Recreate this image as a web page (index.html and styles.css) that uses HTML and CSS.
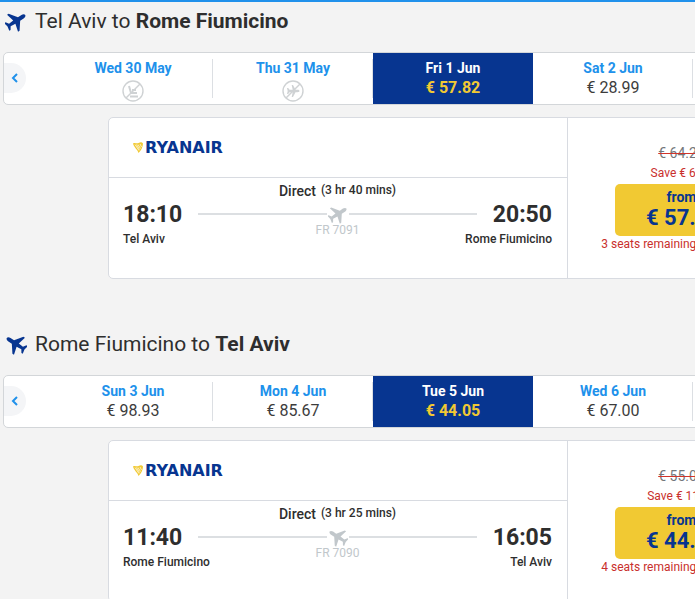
FILE: index.html
```html
<!DOCTYPE html>
<html lang="en">
<head>
    <meta charset="UTF-8">
    <meta name="viewport" content="width=device-width, initial-scale=1.0">
    <title>Select flights</title>
    <link rel="stylesheet" href="styles.css">
</head>
<body>
    <svg class="sprite" aria-hidden="true">
        <symbol id="plane" viewBox="0 0 24 24">
            <path transform="rotate(57 12 12)" d="M23 16.500v-2l-8.800-6.500V3.500C14.200 1.500 13 0 12 0S9.800 1.500 9.800 3.500V8L1 14.500v2l8.800-2.300.6 5.800L7 22.300V24l5-1 5 1v-1.700L13.600 20l.6-5.800z"/>
        </symbol>
        <symbol id="harp" viewBox="0 0 10 11">
            <path fill="#f1c933" d="M0 1.500C2 0 3.500 2 5.500 1 7.500 0 9 0 10 1.500 10 5 8 8.500 5.500 11 5 8 1 5.500 0 1.500z"/>
            <path fill="none" stroke="#fff" stroke-width=".7" d="M2 2.500l4 6M3.500 2.500l3 5M5 2.500l2.500 4M7 2l1.500 3"/>
        </symbol>
    </svg>

    <main class="flights">
        <section class="flight-list">
            <h2 class="route">
                <svg class="route-icon"><use href="#plane"/></svg>
                <span>Tel Aviv to <strong>Rome Fiumicino</strong></span>
            </h2>

            <div class="carousel">
                <button class="carousel-prev" aria-label="Previous dates">
                    <svg viewBox="0 0 8 10"><path d="M6 1L2 5l4 4"/></svg>
                </button>
                <button class="date">
                    <span class="day">Wed 30 May</span>
                    <svg class="no-flight" viewBox="0 0 22 22">
                        <circle cx="11" cy="11" r="10"/>
                        <path d="M4 18L18 4"/>
                        <path class="thick" d="M7 6l2 7h6M8 16.500h8M10 10h4"/>
                    </svg>
                </button>
                <button class="date">
                    <span class="day">Thu 31 May</span>
                    <svg class="no-flight" viewBox="0 0 22 22">
                        <circle cx="11" cy="11" r="10"/>
                        <path d="M4 18L18 4"/>
                        <path class="solid" d="M17.500 11c0-.8-.8-1.200-2-1.200h-2L11 5H9.700l1 4.800H7.500L6.200 8H5l.7 3-.7 3h1.200l1.300-1.800h3.200l-1 4.800H11l2.500-4.800h2c1.200 0 2-.4 2-1.200z"/>
                    </svg>
                </button>
                <button class="date active">
                    <span class="day">Fri 1 Jun</span>
                    <span class="fare">€ 57.82</span>
                </button>
                <button class="date">
                    <span class="day">Sat 2 Jun</span>
                    <span class="fare">€ 28.99</span>
                </button>
            </div>

            <article class="card">
                <div class="card-main">
                    <div class="airline">
                        <svg class="harp"><use href="#harp"/></svg>
                        <span>RYANAIR</span>
                    </div>
                    <div class="journey">
                        <div class="duration">Direct <span>(3 hr 40 mins)</span></div>
                        <div class="times">
                            <span class="time">18:10</span>
                            <span class="line"></span>
                            <svg class="line-icon"><use href="#plane"/></svg>
                            <span class="line"></span>
                            <span class="time">20:50</span>
                        </div>
                        <div class="places">
                            <span>Tel Aviv</span>
                            <span class="flight-number">FR 7091</span>
                            <span>Rome Fiumicino</span>
                        </div>
                    </div>
                </div>
                <div class="card-price">
                    <del>€ 64.24</del>
                    <span class="note">Save € 6.42</span>
                    <button class="btn">
                        <span>from</span>
                        <span class="amount">€ 57.82</span>
                    </button>
                    <span class="note">3 seats remaining at this price</span>
                </div>
            </article>
        </section>

        <section class="flight-list">
            <h2 class="route">
                <svg class="route-icon inbound"><use href="#plane"/></svg>
                <span>Rome Fiumicino to <strong>Tel Aviv</strong></span>
            </h2>

            <div class="carousel">
                <button class="carousel-prev" aria-label="Previous dates">
                    <svg viewBox="0 0 8 10"><path d="M6 1L2 5l4 4"/></svg>
                </button>
                <button class="date">
                    <span class="day">Sun 3 Jun</span>
                    <span class="fare">€ 98.93</span>
                </button>
                <button class="date">
                    <span class="day">Mon 4 Jun</span>
                    <span class="fare">€ 85.67</span>
                </button>
                <button class="date active">
                    <span class="day">Tue 5 Jun</span>
                    <span class="fare">€ 44.05</span>
                </button>
                <button class="date">
                    <span class="day">Wed 6 Jun</span>
                    <span class="fare">€ 67.00</span>
                </button>
            </div>

            <article class="card">
                <div class="card-main">
                    <div class="airline">
                        <svg class="harp"><use href="#harp"/></svg>
                        <span>RYANAIR</span>
                    </div>
                    <div class="journey">
                        <div class="duration">Direct <span>(3 hr 25 mins)</span></div>
                        <div class="times">
                            <span class="time">11:40</span>
                            <span class="line"></span>
                            <svg class="line-icon inbound"><use href="#plane"/></svg>
                            <span class="line"></span>
                            <span class="time">16:05</span>
                        </div>
                        <div class="places">
                            <span>Rome Fiumicino</span>
                            <span class="flight-number">FR 7090</span>
                            <span>Tel Aviv</span>
                        </div>
                    </div>
                </div>
                <div class="card-price">
                    <del>€ 55.06</del>
                    <span class="note">Save € 11.01</span>
                    <button class="btn">
                        <span>from</span>
                        <span class="amount">€ 44.05</span>
                    </button>
                    <span class="note">4 seats remaining at this price</span>
                </div>
            </article>
        </section>
    </main>
</body>
</html>
```
FILE: styles.css
```css
* {
    box-sizing: border-box;
}
body {
    margin: 0;
    height: 100vh;
    overflow: hidden;
    background: #f3f3f3;
    border-top: 2px solid #2091eb;
    color: #2e2e2e;
    font-family: Roboto, Arial, sans-serif;
}
button {
    padding: 0;
    border: none;
    background: none;
    font-family: inherit;
    cursor: pointer;
}
.sprite {
    display: none;
}
.flights {
    min-width: 900px;
    padding-left: 3px;
}
.flight-list {
    padding-bottom: 46px;
}
.route {
    display: flex;
    align-items: center;
    gap: 8px;
    height: 38px;
    margin: 0 0 12px;
    padding-left: 2px;
    font-size: 21px;
    font-weight: 400;
}
.route strong {
    font-weight: 700;
}
.route-icon {
    width: 22px;
    height: 22px;
    fill: #073590;
}
.inbound {
    transform: scaleX(-1);
}
.carousel {
    position: relative;
    display: flex;
    height: 53px;
    padding-left: 49px;
    background: #fff;
    border: 1px solid #d3d6d9;
    border-radius: 5px;
}
.carousel-prev {
    position: absolute;
    left: 0;
    top: 10px;
    width: 22px;
    height: 30px;
    background: #f4f5f7;
    border-radius: 0 15px 15px 0;
}
.carousel-prev svg {
    width: 8px;
    height: 10px;
    fill: none;
    stroke: #2091eb;
    stroke-width: 2;
}
.date {
    position: relative;
    display: flex;
    flex: 0 0 160px;
    flex-direction: column;
    align-items: center;
    padding-top: 6px;
    color: #3c3c3c;
}
.date::after {
    content: "";
    position: absolute;
    right: 0;
    top: 6px;
    bottom: 6px;
    border-right: 1px solid #dcdfe3;
}
.day {
    color: #2091eb;
    font-size: 14px;
    font-weight: 700;
    line-height: 19px;
}
.fare {
    font-size: 16px;
    font-weight: 400;
    line-height: 19px;
}
.date.active {
    background: #073590;
}
.date.active::after {
    display: none;
}
.active .day {
    color: #fff;
}
.active .fare {
    color: #f1c933;
    font-weight: 700;
}
.no-flight {
    width: 22px;
    height: 22px;
    margin-top: 2px;
    fill: none;
    stroke: #cfd2d4;
    stroke-width: 1.4;
}
.no-flight .thick {
    stroke-width: 2;
}
.no-flight .solid {
    fill: #cfd2d4;
    stroke: none;
}
.card {
    display: flex;
    height: 162px;
    margin: 12px 104px 0 105px;
    background: #fff;
    border: 1px solid #d8dbe1;
    border-radius: 5px;
}
.card-main {
    flex: 0 0 459px;
    border-right: 1px solid #d8dbe1;
}
.airline {
    display: flex;
    align-items: center;
    gap: 2px;
    height: 60px;
    padding: 0 24px;
    border-bottom: 1px solid #d8dbe1;
    color: #073590;
    font-family: "DejaVu Sans", sans-serif;
    font-size: 16px;
    font-weight: 700;
}
.harp {
    width: 10px;
    height: 11px;
}
.journey {
    padding: 3px 15px 0 14px;
}
.duration {
    display: flex;
    justify-content: center;
    gap: 5px;
    font-size: 14px;
    font-weight: 500;
    line-height: 20px;
}
.duration span {
    font-size: 12px;
    line-height: 18px;
}
.times {
    display: flex;
    align-items: center;
    height: 26px;
}
.time {
    font-size: 23px;
    font-weight: 700;
}
.time:first-child {
    margin-right: 16px;
}
.time:last-child {
    margin-left: 16px;
}
.line {
    flex: 1;
    height: 2px;
    background: #dcdfe2;
}
.line-icon {
    width: 20px;
    height: 20px;
    margin: 0 1px;
    fill: #c1c7cb;
}
.places {
    display: grid;
    grid-template-columns: 1fr auto 1fr;
    font-size: 12px;
    font-weight: 500;
    line-height: 24px;
}
.places span:last-child {
    text-align: right;
}
.places .flight-number {
    color: #c1c7cb;
    font-weight: 400;
    line-height: 6px;
}
.card-price {
    display: flex;
    flex: 1;
    flex-direction: column;
    align-items: center;
    padding-top: 23px;
}
.card-price del {
    color: #73777b;
    font-size: 14px;
    line-height: 24px;
    text-decoration-color: #d1342b;
}
.note {
    color: #c9302c;
    font-size: 12px;
    line-height: 16px;
}
.btn {
    display: flex;
    flex-direction: column;
    align-items: center;
    width: 134px;
    height: 52px;
    margin-top: 3px;
    padding-top: 4px;
    background: #f1c933;
    border-radius: 5px;
    color: #073590;
    font-size: 14px;
    font-weight: 700;
    line-height: 18px;
}
.amount {
    padding-left: 4px;
    font-size: 22px;
    line-height: 24px;
}
```
